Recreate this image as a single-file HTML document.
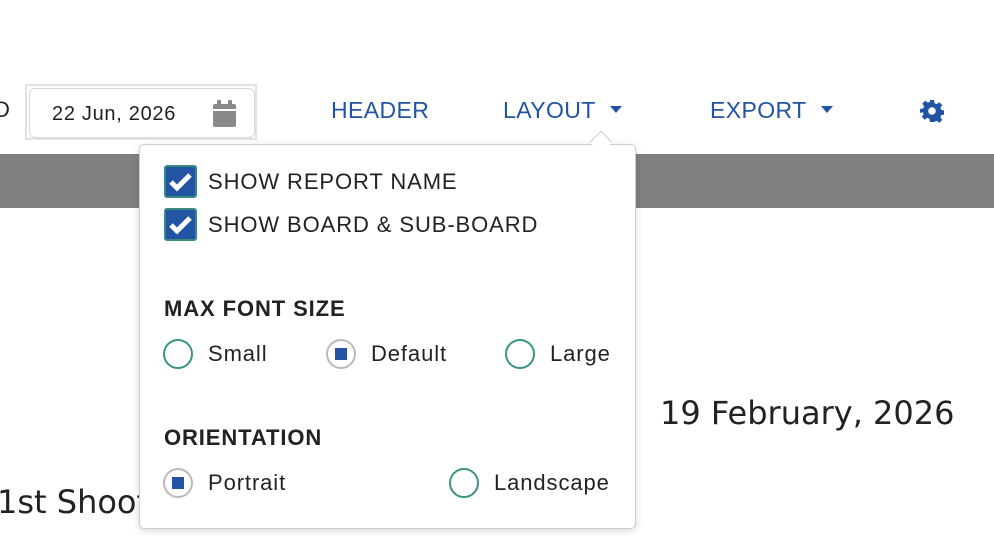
<!DOCTYPE html>
<html><head><style>
body{margin:0;width:994px;height:536px;overflow:hidden;background:#fff;font-family:"Liberation Sans",Arial,sans-serif;position:relative;color:#222}
.a{position:absolute;white-space:nowrap}
.nav{color:#2254a3;font-size:23px;top:97px;letter-spacing:0.4px}
.caret{display:inline-block;width:0;height:0;border-left:6px solid transparent;border-right:6px solid transparent;border-top:7px solid #2254a3;vertical-align:middle;margin-left:14px;position:relative;top:-2px}
.cb{position:absolute;left:164px;width:29px;height:29px;background:#2254a3;border:2px solid #3a8a80;border-radius:3px}
.lbl{font-size:22px;color:#222;letter-spacing:0.9px}
.r{position:absolute;width:26px;height:26px;border:2px solid #3a9482;border-radius:50%}
.r.on{border-color:#bbb}
.r.on::after{content:"";position:absolute;left:7px;top:7px;width:12px;height:12px;background:#2254a3}
.h{font-weight:bold;font-size:22px;letter-spacing:0.9px}
</style></head><body>
<div class="a" style="left:-6px;top:97px;font-size:22px">D</div>
<div class="a" style="left:25px;top:84px;width:232px;height:56px;border:2px solid #e2e2e2;box-sizing:border-box"></div>
<div class="a" style="left:29px;top:88px;width:226px;height:50px;border:1px solid #d8d8d8;border-radius:6px;box-sizing:border-box"></div>
<div class="a" style="left:52px;top:103px;font-size:20px;letter-spacing:0.7px">22 Jun, 2026</div>
<svg class="a" style="left:213px;top:100px" width="23" height="27" viewBox="0 0 23 27"><rect x="0" y="4" width="23" height="23" rx="2" fill="#8a8a8a"/><rect x="4" y="0" width="4" height="7" rx="1" fill="#8a8a8a"/><rect x="15" y="0" width="4" height="7" rx="1" fill="#8a8a8a"/><rect x="0" y="9" width="23" height="2" fill="#fff"/></svg>
<div class="a nav" style="left:331px">HEADER</div>
<div class="a nav" style="left:503px">LAYOUT<span class="caret"></span></div>
<div class="a nav" style="left:710px">EXPORT<span class="caret"></span></div>
<svg class="a" style="left:920px;top:99px" width="24" height="24" viewBox="0 0 24 24"><path fill="#2254a3" d="M10 1h4l.6 3.2 2 .9 2.8-1.8 2.8 2.8-1.8 2.8.9 2 3.2.6v4l-3.2.6-.9 2 1.8 2.8-2.8 2.8-2.8-1.8-2 .9L14 23h-4l-.6-3.2-2-.9-2.8 1.8-2.8-2.8 1.8-2.8-.9-2L0 14v-4l3.2-.6.9-2-1.8-2.8 2.8-2.8 2.8 1.8 2-.9z"/><circle cx="12" cy="12" r="3.8" fill="#fff"/></svg>
<div class="a" style="left:0;top:154px;width:994px;height:54px;background:#808080"></div>
<div class="a" style="left:660px;top:394px;font-size:32px;font-family:'DejaVu Sans',sans-serif">19 February, 2026</div>
<div class="a" style="left:-3px;top:483px;font-size:32px;font-family:'DejaVu Sans',sans-serif">1st Shooting</div>
<div class="a" style="left:139px;top:144px;width:497px;height:385px;background:#fff;border:1px solid #ccc;border-radius:5px;box-sizing:border-box;box-shadow:0 2px 8px rgba(0,0,0,.15)"></div>
<div class="a" style="left:593px;top:134px;width:15px;height:15px;background:#fff;border-left:1px solid #ccc;border-top:1px solid #ccc;transform:rotate(45deg)"></div>
<div class="cb" style="top:165px"><svg width="29" height="29" viewBox="0 0 29 29"><path d="M5 15l6 6L24 8" stroke="#fff" stroke-width="5" fill="none"/></svg></div>
<div class="a lbl" style="left:208px;top:169px">SHOW REPORT NAME</div>
<div class="cb" style="top:208px"><svg width="29" height="29" viewBox="0 0 29 29"><path d="M5 15l6 6L24 8" stroke="#fff" stroke-width="5" fill="none"/></svg></div>
<div class="a lbl" style="left:208px;top:212px">SHOW BOARD &amp; SUB-BOARD</div>
<div class="a h" style="left:164px;top:296px">MAX FONT SIZE</div>
<div class="r" style="left:163px;top:339px"></div><div class="a lbl" style="left:208px;top:341px">Small</div>
<div class="r on" style="left:326px;top:339px"></div><div class="a lbl" style="left:371px;top:341px">Default</div>
<div class="r" style="left:505px;top:339px"></div><div class="a lbl" style="left:550px;top:341px">Large</div>
<div class="a h" style="left:164px;top:425px">ORIENTATION</div>
<div class="r on" style="left:163px;top:468px"></div><div class="a lbl" style="left:208px;top:470px">Portrait</div>
<div class="r" style="left:449px;top:468px"></div><div class="a lbl" style="left:494px;top:470px">Landscape</div>
</body></html>
